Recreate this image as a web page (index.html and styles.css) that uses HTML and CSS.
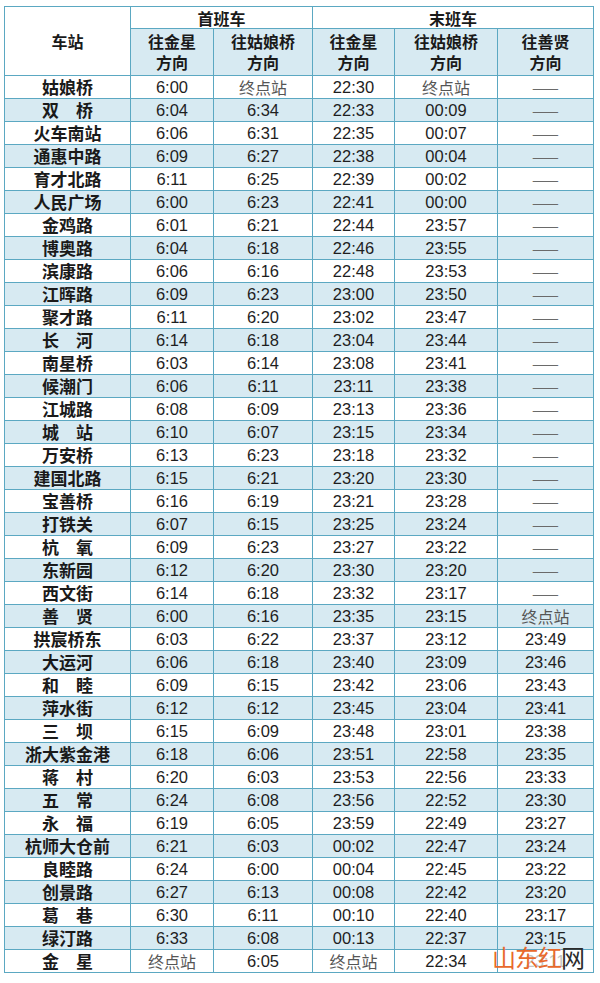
FILE: index.html
```html
<!DOCTYPE html>
<html lang="zh-CN">
<head>
<meta charset="utf-8">
<title>地铁首末班车时刻表</title>
<link rel="stylesheet" href="styles.css">
</head>
<body>
<div class="page">
<table class="timetable">
<colgroup>
<col class="c-station"><col class="c-a"><col class="c-b"><col class="c-c"><col class="c-d"><col class="c-e">
</colgroup>
<thead>
<tr class="h1"><th rowspan="2" class="station-head">车站</th><th colspan="2">首班车</th><th colspan="3">末班车</th></tr>
<tr class="h2"><th>往金星<br>方向</th><th>往姑娘桥<br>方向</th><th>往金星<br>方向</th><th>往姑娘桥<br>方向</th><th>往善贤<br>方向</th></tr>
</thead>
<tbody>
<tr><td class="st">姑娘桥</td><td>6:00</td><td class="end">终点站</td><td>22:30</td><td class="end">终点站</td><td class="dash">——</td></tr>
<tr><td class="st">双　桥</td><td>6:04</td><td>6:34</td><td>22:33</td><td>00:09</td><td class="dash">——</td></tr>
<tr><td class="st">火车南站</td><td>6:06</td><td>6:31</td><td>22:35</td><td>00:07</td><td class="dash">——</td></tr>
<tr><td class="st">通惠中路</td><td>6:09</td><td>6:27</td><td>22:38</td><td>00:04</td><td class="dash">——</td></tr>
<tr><td class="st">育才北路</td><td>6:11</td><td>6:25</td><td>22:39</td><td>00:02</td><td class="dash">——</td></tr>
<tr><td class="st">人民广场</td><td>6:00</td><td>6:23</td><td>22:41</td><td>00:00</td><td class="dash">——</td></tr>
<tr><td class="st">金鸡路</td><td>6:01</td><td>6:21</td><td>22:44</td><td>23:57</td><td class="dash">——</td></tr>
<tr><td class="st">博奥路</td><td>6:04</td><td>6:18</td><td>22:46</td><td>23:55</td><td class="dash">——</td></tr>
<tr><td class="st">滨康路</td><td>6:06</td><td>6:16</td><td>22:48</td><td>23:53</td><td class="dash">——</td></tr>
<tr><td class="st">江晖路</td><td>6:09</td><td>6:23</td><td>23:00</td><td>23:50</td><td class="dash">——</td></tr>
<tr><td class="st">聚才路</td><td>6:11</td><td>6:20</td><td>23:02</td><td>23:47</td><td class="dash">——</td></tr>
<tr><td class="st">长　河</td><td>6:14</td><td>6:18</td><td>23:04</td><td>23:44</td><td class="dash">——</td></tr>
<tr><td class="st">南星桥</td><td>6:03</td><td>6:14</td><td>23:08</td><td>23:41</td><td class="dash">——</td></tr>
<tr><td class="st">候潮门</td><td>6:06</td><td>6:11</td><td>23:11</td><td>23:38</td><td class="dash">——</td></tr>
<tr><td class="st">江城路</td><td>6:08</td><td>6:09</td><td>23:13</td><td>23:36</td><td class="dash">——</td></tr>
<tr><td class="st">城　站</td><td>6:10</td><td>6:07</td><td>23:15</td><td>23:34</td><td class="dash">——</td></tr>
<tr><td class="st">万安桥</td><td>6:13</td><td>6:23</td><td>23:18</td><td>23:32</td><td class="dash">——</td></tr>
<tr><td class="st">建国北路</td><td>6:15</td><td>6:21</td><td>23:20</td><td>23:30</td><td class="dash">——</td></tr>
<tr><td class="st">宝善桥</td><td>6:16</td><td>6:19</td><td>23:21</td><td>23:28</td><td class="dash">——</td></tr>
<tr><td class="st">打铁关</td><td>6:07</td><td>6:15</td><td>23:25</td><td>23:24</td><td class="dash">——</td></tr>
<tr><td class="st">杭　氧</td><td>6:09</td><td>6:23</td><td>23:27</td><td>23:22</td><td class="dash">——</td></tr>
<tr><td class="st">东新园</td><td>6:12</td><td>6:20</td><td>23:30</td><td>23:20</td><td class="dash">——</td></tr>
<tr><td class="st">西文街</td><td>6:14</td><td>6:18</td><td>23:32</td><td>23:17</td><td class="dash">——</td></tr>
<tr><td class="st">善　贤</td><td>6:00</td><td>6:16</td><td>23:35</td><td>23:15</td><td class="end">终点站</td></tr>
<tr><td class="st">拱宸桥东</td><td>6:03</td><td>6:22</td><td>23:37</td><td>23:12</td><td>23:49</td></tr>
<tr><td class="st">大运河</td><td>6:06</td><td>6:18</td><td>23:40</td><td>23:09</td><td>23:46</td></tr>
<tr><td class="st">和　睦</td><td>6:09</td><td>6:15</td><td>23:42</td><td>23:06</td><td>23:43</td></tr>
<tr><td class="st">萍水街</td><td>6:12</td><td>6:12</td><td>23:45</td><td>23:04</td><td>23:41</td></tr>
<tr><td class="st">三　坝</td><td>6:15</td><td>6:09</td><td>23:48</td><td>23:01</td><td>23:38</td></tr>
<tr><td class="st">浙大紫金港</td><td>6:18</td><td>6:06</td><td>23:51</td><td>22:58</td><td>23:35</td></tr>
<tr><td class="st">蒋　村</td><td>6:20</td><td>6:03</td><td>23:53</td><td>22:56</td><td>23:33</td></tr>
<tr><td class="st">五　常</td><td>6:24</td><td>6:08</td><td>23:56</td><td>22:52</td><td>23:30</td></tr>
<tr><td class="st">永　福</td><td>6:19</td><td>6:05</td><td>23:59</td><td>22:49</td><td>23:27</td></tr>
<tr><td class="st">杭师大仓前</td><td>6:21</td><td>6:03</td><td>00:02</td><td>22:47</td><td>23:24</td></tr>
<tr><td class="st">良睦路</td><td>6:24</td><td>6:00</td><td>00:04</td><td>22:45</td><td>23:22</td></tr>
<tr><td class="st">创景路</td><td>6:27</td><td>6:13</td><td>00:08</td><td>22:42</td><td>23:20</td></tr>
<tr><td class="st">葛　巷</td><td>6:30</td><td>6:11</td><td>00:10</td><td>22:40</td><td>23:17</td></tr>
<tr><td class="st">绿汀路</td><td>6:33</td><td>6:08</td><td>00:13</td><td>22:37</td><td>23:15</td></tr>
<tr><td class="st">金　星</td><td class="end">终点站</td><td>6:05</td><td class="end">终点站</td><td>22:34</td><td class="hidden-time">23:11</td></tr>
</tbody>
</table>
<div class="watermark"><span class="wm-orange">山东红</span><span class="wm-dark">网</span></div>
</div>
</body>
</html>
```

FILE: styles.css
```css
html, body {
  margin: 0;
  padding: 0;
  background: #ffffff;
}

.page {
  position: relative;
  width: 600px;
  height: 983px;
  padding: 6px 0 0 4px;
  box-sizing: border-box;
}

.timetable {
  border-collapse: collapse;
  table-layout: fixed;
  width: 589px;
  font-family: "Liberation Sans", "Noto Sans CJK SC", sans-serif;
  font-size: 16.5px;
  color: #1e1e1e;
}

.c-station { width: 126px; }
.c-a { width: 83px; }
.c-b { width: 99px; }
.c-c { width: 82px; }
.c-d { width: 103px; }
.c-e { width: 96px; }

.timetable th,
.timetable td {
  border: 1px solid #5ba8c2;
  padding: 0;
  text-align: center;
  vertical-align: middle;
}

.timetable th {
  font-family: "Noto Sans CJK SC", sans-serif;
  font-weight: 700;
  font-size: 16px;
  color: #1a1a1a;
  line-height: 21px;
}

.h1 { height: 22px; }
.h1 th { background: #ffffff; line-height: 20px; }
.h2 { height: 47px; }
.h2 th { background: #d7eaf2; }
.timetable th.station-head { background: #ffffff; }

.timetable tbody tr { height: 23px; }
.timetable tbody td { line-height: 20px; }
.timetable tbody tr:nth-child(even) td { background: #d7eaf2; }

.timetable td.st {
  font-family: "Noto Sans CJK SC", sans-serif;
  font-weight: 700;
  font-size: 17px;
  color: #1a1a1a;
}

.timetable td.end {
  font-family: "Noto Sans CJK SC", sans-serif;
  font-weight: 400;
  font-size: 16px;
  color: #555555;
}

.timetable td.dash {
  font-family: "Noto Sans CJK SC", sans-serif;
  font-size: 16px;
  color: #6a6a6a;
}

.timetable td.hidden-time {
  color: #c4c4c4;
}

.watermark {
  position: absolute;
  left: 492px;
  top: 942px;
  font-family: "Noto Sans CJK SC", sans-serif;
  font-size: 24px;
  line-height: 30px;
  letter-spacing: -1px;
}

.wm-orange { color: #e8692c; }
.wm-dark { color: #2b2b2b; }
```
